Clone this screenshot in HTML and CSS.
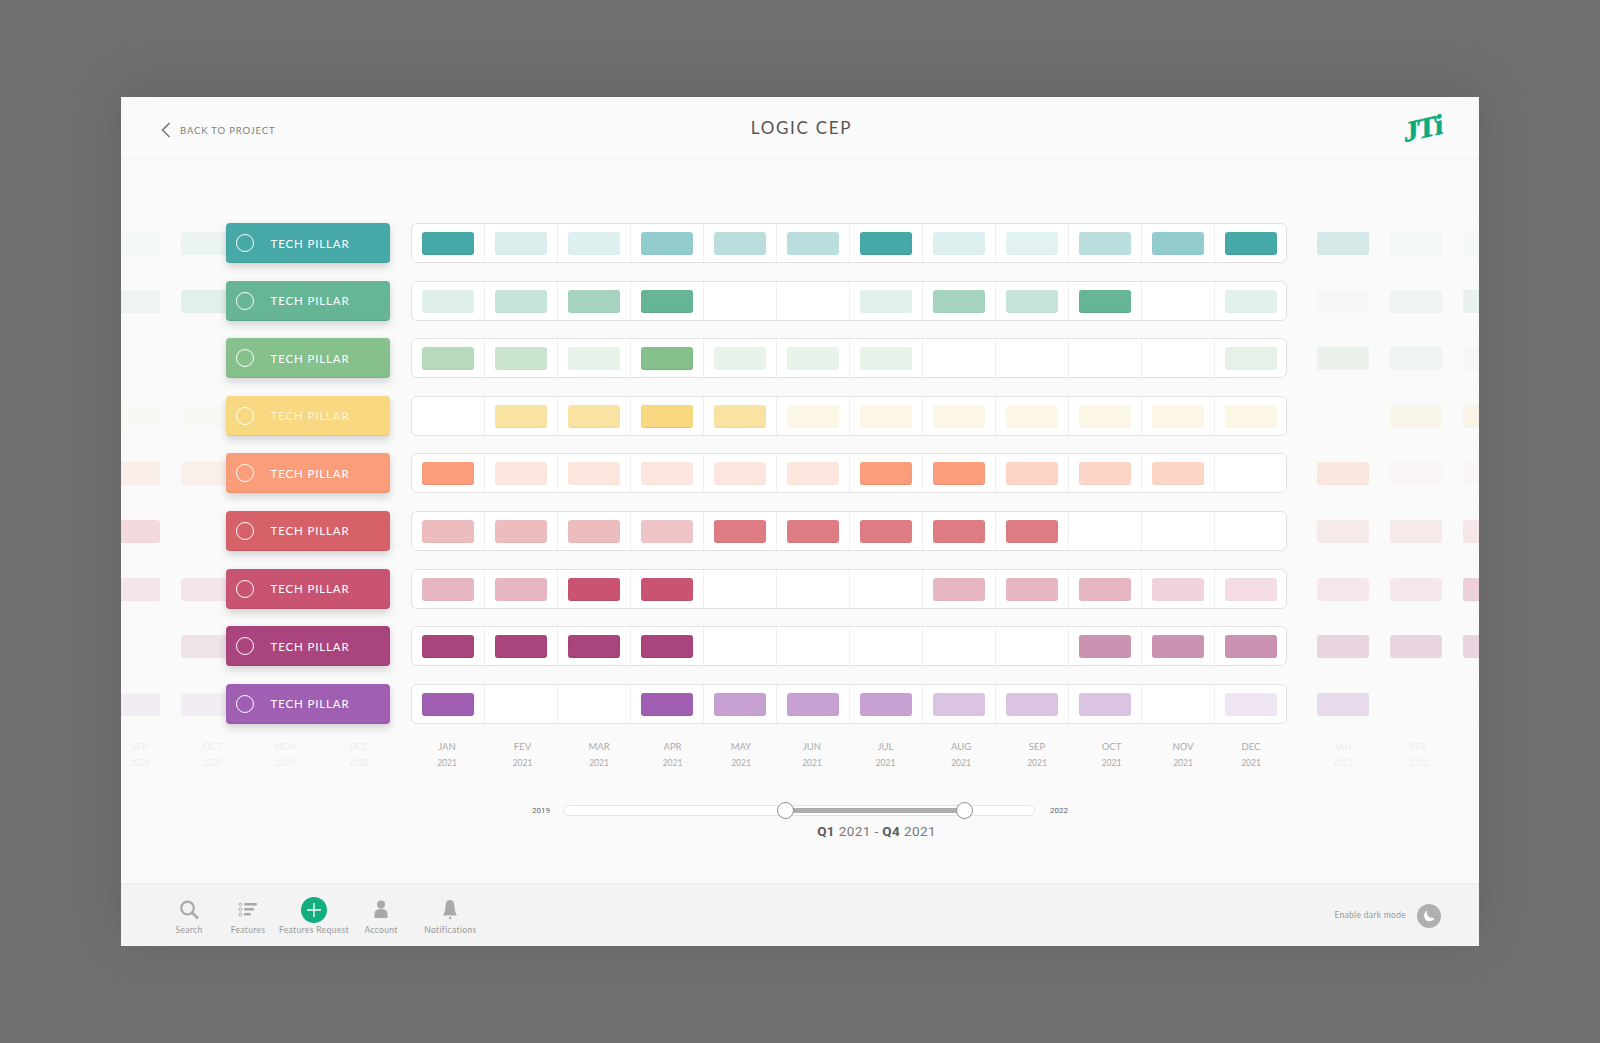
FILE: index.html
```html
<!DOCTYPE html><html lang="en">
<head>
  <meta charset="UTF-8">
  <meta name="viewport" content="width=device-width, initial-scale=1.0">
  <title>Logic CEP</title>
  <link rel="stylesheet" href="styles.css">
</head>
<body>
  <div class="window">
    <header class="top">
      <a class="back">
        <svg class="back-arrow" width="10" height="16" viewBox="0 0 10 16"><path d="M8.5 1 L1.5 8 L8.5 15" fill="none" stroke="#777" stroke-width="1.6"/></svg>
        BACK TO PROJECT
      </a>
      <h1 class="title">LOGIC CEP</h1>
      <div class="logo-wrap"><span class="logo">JTi</span></div>
    </header>

    <main class="board">
      <div class="row teal">
        <div class="past"><i class="chip o3"></i><i class="chip o8"></i></div>
        <div class="pill"><span class="ring"></span>TECH PILLAR</div>
        <div class="track"><i class="chip o100"></i><i class="chip o20"></i><i class="chip o18"></i><i class="chip o55"></i><i class="chip o35"></i><i class="chip o35"></i><i class="chip o100"></i><i class="chip o18"></i><i class="chip o15"></i><i class="chip o35"></i><i class="chip o55"></i><i class="chip o100"></i></div>
        <div class="future"><i class="chip o20"></i><i class="chip o3"></i><i class="chip o3"></i></div>
      </div>
      <div class="row green">
        <div class="past"><i class="chip o8"></i><i class="chip o15"></i></div>
        <div class="pill"><span class="ring"></span>TECH PILLAR</div>
        <div class="track"><i class="chip o20"></i><i class="chip o35"></i><i class="chip o55"></i><i class="chip o100"></i><i class="chip"></i><i class="chip"></i><i class="chip o18"></i><i class="chip o55"></i><i class="chip o35"></i><i class="chip o100"></i><i class="chip"></i><i class="chip o18"></i></div>
        <div class="future"><i class="chip o3"></i><i class="chip o8"></i><i class="chip o12"></i></div>
      </div>
      <div class="row lime">
        <div class="past"><i class="chip"></i><i class="chip"></i></div>
        <div class="pill"><span class="ring"></span>TECH PILLAR</div>
        <div class="track"><i class="chip o55"></i><i class="chip o40"></i><i class="chip o18"></i><i class="chip o100"></i><i class="chip o18"></i><i class="chip o18"></i><i class="chip o18"></i><i class="chip"></i><i class="chip"></i><i class="chip"></i><i class="chip"></i><i class="chip o20"></i></div>
        <div class="future"><i class="chip o12"></i><i class="chip o8"></i><i class="chip o3"></i></div>
      </div>
      <div class="row yellow">
        <div class="past"><i class="chip o3"></i><i class="chip o3"></i></div>
        <div class="pill"><span class="ring"></span>TECH PILLAR</div>
        <div class="track"><i class="chip"></i><i class="chip o70"></i><i class="chip o70"></i><i class="chip o100"></i><i class="chip o70"></i><i class="chip o20"></i><i class="chip o20"></i><i class="chip o20"></i><i class="chip o20"></i><i class="chip o20"></i><i class="chip o20"></i><i class="chip o20"></i></div>
        <div class="future"><i class="chip"></i><i class="chip o12"></i><i class="chip o15"></i></div>
      </div>
      <div class="row orange">
        <div class="past"><i class="chip o12"></i><i class="chip o10"></i></div>
        <div class="pill"><span class="ring"></span>TECH PILLAR</div>
        <div class="track"><i class="chip o100"></i><i class="chip o25"></i><i class="chip o25"></i><i class="chip o25"></i><i class="chip o25"></i><i class="chip o25"></i><i class="chip o100"></i><i class="chip o100"></i><i class="chip o40"></i><i class="chip o40"></i><i class="chip o40"></i><i class="chip"></i></div>
        <div class="future"><i class="chip o20"></i><i class="chip o3"></i><i class="chip o3"></i></div>
      </div>
      <div class="row red">
        <div class="past"><i class="chip o20"></i><i class="chip"></i></div>
        <div class="pill"><span class="ring"></span>TECH PILLAR</div>
        <div class="track"><i class="chip o40"></i><i class="chip o40"></i><i class="chip o40"></i><i class="chip o35"></i><i class="chip o80"></i><i class="chip o80"></i><i class="chip o80"></i><i class="chip o80"></i><i class="chip o80"></i><i class="chip"></i><i class="chip"></i><i class="chip"></i></div>
        <div class="future"><i class="chip o10"></i><i class="chip o10"></i><i class="chip o12"></i></div>
      </div>
      <div class="row crimson">
        <div class="past"><i class="chip o12"></i><i class="chip o12"></i></div>
        <div class="pill"><span class="ring"></span>TECH PILLAR</div>
        <div class="track"><i class="chip o40"></i><i class="chip o40"></i><i class="chip o100"></i><i class="chip o100"></i><i class="chip"></i><i class="chip"></i><i class="chip"></i><i class="chip o40"></i><i class="chip o40"></i><i class="chip o40"></i><i class="chip o25"></i><i class="chip o20"></i></div>
        <div class="future"><i class="chip o10"></i><i class="chip o10"></i><i class="chip o25"></i></div>
      </div>
      <div class="row magenta">
        <div class="past"><i class="chip"></i><i class="chip o12"></i></div>
        <div class="pill"><span class="ring"></span>TECH PILLAR</div>
        <div class="track"><i class="chip o100"></i><i class="chip o100"></i><i class="chip o100"></i><i class="chip o100"></i><i class="chip"></i><i class="chip"></i><i class="chip"></i><i class="chip"></i><i class="chip"></i><i class="chip o55"></i><i class="chip o55"></i><i class="chip o55"></i></div>
        <div class="future"><i class="chip o20"></i><i class="chip o20"></i><i class="chip o20"></i></div>
      </div>
      <div class="row purple">
        <div class="past"><i class="chip o8"></i><i class="chip o8"></i></div>
        <div class="pill"><span class="ring"></span>TECH PILLAR</div>
        <div class="track"><i class="chip o100"></i><i class="chip"></i><i class="chip"></i><i class="chip o100"></i><i class="chip o55"></i><i class="chip o55"></i><i class="chip o55"></i><i class="chip o35"></i><i class="chip o35"></i><i class="chip o35"></i><i class="chip"></i><i class="chip o15"></i></div>
        <div class="future"><i class="chip o20"></i><i class="chip"></i><i class="chip"></i></div>
      </div>

      <div class="months">
        <div class="months-past">
          <div class="month"><b>SEP</b>2020</div><div class="month"><b>OCT</b>2020</div><div class="month"><b>NOV</b>2020</div><div class="month"><b>DEC</b>2020</div>
        </div>
        <div class="months-now">
          <div class="month"><b>JAN</b>2021</div><div class="month"><b>FEV</b>2021</div><div class="month"><b>MAR</b>2021</div><div class="month"><b>APR</b>2021</div><div class="month"><b>MAY</b>2021</div><div class="month"><b>JUN</b>2021</div><div class="month"><b>JUL</b>2021</div><div class="month"><b>AUG</b>2021</div><div class="month"><b>SEP</b>2021</div><div class="month"><b>OCT</b>2021</div><div class="month"><b>NOV</b>2021</div><div class="month"><b>DEC</b>2021</div>
        </div>
        <div class="months-future">
          <div class="month"><b>JAN</b>2022</div><div class="month"><b>FEV</b>2022</div>
        </div>
      </div>

      <div class="range">
        <span class="range-year">2019</span>
        <div class="slider">
          <span class="slider-fill"></span>
          <span class="thumb thumb-from"></span>
          <span class="thumb thumb-to"></span>
        </div>
        <span class="range-year">2022</span>
      </div>
      <div class="range-label"><b>Q1</b> 2021 - <b>Q4</b> 2021</div>
    </main>

    <footer class="bottom">
      <nav class="nav">
        <a class="nav-item nav-search">
          <svg width="22" height="26" viewBox="0 0 22 26"><circle cx="9.5" cy="11" r="6.3" fill="none" stroke="#a9a9a9" stroke-width="2.2"/><path d="M14 15.5 L20 21.5" stroke="#a9a9a9" stroke-width="2.6"/></svg>
          Search
        </a>
        <a class="nav-item nav-features">
          <svg width="20" height="26" viewBox="0 0 20 26"><g fill="none" stroke="#a9a9a9"><circle cx="2.5" cy="7.5" r="1.4"/><circle cx="2.5" cy="12.5" r="1.4"/><circle cx="2.5" cy="17.5" r="1.4"/></g><g fill="#a9a9a9"><rect x="6" y="6" width="13" height="2.6" rx="1"/><rect x="6" y="11" width="10" height="2.6" rx="1"/><rect x="6" y="16" width="7" height="2.6" rx="1"/></g></svg>
          Features
        </a>
        <a class="nav-item nav-request">
          <svg width="26" height="26" viewBox="0 0 26 26"><circle cx="13" cy="13" r="13" fill="#13ad7f"/><path d="M13 6 V20 M6 13 H20" stroke="#fff" stroke-width="1.3"/></svg>
          Features Request
        </a>
        <a class="nav-item nav-account">
          <svg width="16" height="26" viewBox="0 0 16 26"><circle cx="8" cy="7.5" r="4" fill="#a9a9a9"/><path d="M1.5 21 V16.5 C1.5 13.5 4 12 8 12 C12 12 14.5 13.5 14.5 16.5 V21 Z" fill="#a9a9a9"/></svg>
          Account
        </a>
        <a class="nav-item nav-alerts">
          <svg width="16" height="26" viewBox="0 0 16 26"><path d="M8 3 C11.5 3 12.5 6 12.5 9.5 C12.5 13.5 13.5 16 15 18.5 H1 C2.5 16 3.5 13.5 3.5 9.5 C3.5 6 4.5 3 8 3 Z" fill="#a9a9a9"/><circle cx="8" cy="21" r="1.2" fill="#a9a9a9"/></svg>
          Notifications
        </a>
      </nav>
      <div class="dark-mode">
        <span class="dark-label">Enable dark mode</span>
        <span class="dark-btn">
          <svg width="14" height="14" viewBox="0 0 14 14"><path d="M5 1.5 C3.8 5.5 6.5 9.5 12.5 9 C11 12 7.5 13 5 11.8 C1.5 10 1 4 5 1.5 Z" fill="#fff"/></svg>
        </span>
      </div>
    </footer>
  </div>
</body>
</html>
```

FILE: styles.css
```css
* {
  box-sizing: border-box;
}
body {
  font-family: Lato, "Open Sans", sans-serif;
  background: #707070;
  display: flex;
  justify-content: center;
  align-items: center;
  height: 100vh;
  margin: 0;
  overflow: hidden;
}
.window {
  width: 1358px;
  height: 849px;
  background: #fafafa;
  box-shadow: 0 -8px 50px rgba(0,0,0,0.13);
  display: flex;
  flex-direction: column;
  overflow: hidden;
}

/* header */
.top {
  height: 62px;
  flex: none;
  border-bottom: 1px solid #f2f2f2;
  display: grid;
  grid-template-columns: 1fr auto 1fr;
  align-items: center;
  padding: 0 37px 0 40px;
}
.back {
  display: flex;
  align-items: center;
  gap: 9px;
  font-size: 9.5px;
  letter-spacing: 0.85px;
  color: #808080;
  padding-top: 5px;
}
.title {
  margin: 0;
  font-size: 17px;
  font-weight: 400;
  letter-spacing: 1.7px;
  color: #555;
}
.logo-wrap {
  display: flex;
  justify-content: flex-end;
}
.logo {
  font-family: "Liberation Serif", serif;
  font-weight: bold;
  font-size: 29px;
  line-height: 30px;
  letter-spacing: -1.2px;
  color: #0cab7c;
  -webkit-text-stroke: 0.6px #0cab7c;
  transform: skewY(-13deg);
}

/* rows */
.board {
  flex: 1;
  padding-top: 64px;
  display: flex;
  flex-direction: column;
  gap: 17.6px;
}
.row {
  display: flex;
  height: 40px;
  flex: none;
}
.teal { --c: #47a8a8; }
.green { --c: #66b594; }
.lime { --c: #86c08d; }
.yellow { --c: #f8d981; }
.orange { --c: #f99d7a; }
.red { --c: #d66168; }
.crimson { --c: #c85472; }
.magenta { --c: #a9447c; }
.purple { --c: #a05fb2; }

.chip {
  display: block;
  height: 23px;
  width: 52px;
  background: var(--c);
  border-radius: 3px;
  box-shadow: inset 0 -1px 1px rgba(0,0,0,0.08);
  opacity: 0;
}
.o3 { opacity: 0.03; }
.o5 { opacity: 0.05; }
.o8 { opacity: 0.08; }
.o10 { opacity: 0.1; }
.o12 { opacity: 0.12; }
.o15 { opacity: 0.15; }
.o18 { opacity: 0.18; }
.o20 { opacity: 0.2; }
.o25 { opacity: 0.25; }
.o35 { opacity: 0.37; }
.o40 { opacity: 0.42; }
.o55 { opacity: 0.58; }
.o70 { opacity: 0.72; }
.o80 { opacity: 0.82; }
.o100 { opacity: 1; }

.past {
  flex: none;
  width: 156px;
  margin-left: -13px;
  display: flex;
  gap: 21px;
  padding-top: 9px;
}
.pill {
  flex: none;
  position: relative;
  z-index: 1;
  width: 164px;
  height: 40px;
  margin-left: -38.5px;
  padding-left: 10px;
  background: var(--c);
  border-radius: 4px;
  box-shadow: 0 4px 8px rgba(0,0,0,0.16), inset 0 -1px 1px rgba(0,0,0,0.08);
  display: flex;
  align-items: center;
  gap: 17px;
  color: #fff;
  font-size: 11.5px;
  letter-spacing: 0.85px;
}
.yellow .pill {
  color: #fdf3d2;
}
.ring {
  width: 18px;
  height: 18px;
  border: 1px solid #fff;
  border-radius: 50%;
}
.track {
  flex: none;
  width: 876px;
  height: 40px;
  margin-left: 21.5px;
  background: repeating-linear-gradient(to right, #fff 0 72px, #f0f0f0 72px 73px);
  border: 1px solid #e2e2e2;
  border-radius: 6px;
  display: grid;
  grid-template-columns: repeat(12, 73px);
  padding-top: 8px;
}
.track .chip {
  margin-left: 9.5px;
}
.future {
  flex: none;
  width: 200px;
  height: 40px;
  margin-left: 20px;
  border: 1px solid #f8f8f8;
  border-right: 0;
  border-radius: 6px 0 0 6px;
  display: flex;
  gap: 21px;
  padding: 8px 0 0 9px;
}
.future .chip {
  flex: none;
}

/* months */
.months {
  display: flex;
  text-align: center;
  font-size: 8.5px;
  color: #aaa;
}
.months-past,
.months-now,
.months-future {
  display: grid;
  flex: none;
  grid-auto-flow: column;
  grid-auto-columns: 73px;
}
.months-past {
  margin: 0 15.5px 0 -18px;
}
.months-now {
  /* labels in the design do not sit exactly on the cell centres */
  grid-template-columns: 73px 78px 75px 72px 65px 77px 70px 81px 71px 78px 65px 71px;
}
.months-past,
.months-future {
  opacity: 0.18;
}
.months-future {
  margin-left: 18px;
  grid-auto-columns: 76px;
}
.month b {
  display: block;
  font-weight: 400;
  font-size: 9.5px;
  margin-bottom: 6px;
}

/* range slider */
.range {
  display: flex;
  justify-content: center;
  align-items: center;
  gap: 13px;
  margin-top: 19px;
  font-family: Roboto, sans-serif;
  font-size: 8px;
  color: #666;
}
.range-year:last-child {
  margin-left: 2px;
}
.slider {
  position: relative;
  width: 472px;
  height: 11px;
  background: #fff;
  border: 1px solid #e4e4e4;
  border-radius: 6px;
}
.slider-fill {
  position: absolute;
  left: 47%;
  right: 14.8%;
  top: 2px;
  height: 5px;
  background: #adadad;
}
.thumb {
  position: absolute;
  top: -4px;
  width: 17px;
  height: 17px;
  margin-left: -8px;
  background: #fff;
  border: 1px solid #8d8d8d;
  border-radius: 50%;
}
.thumb-from { left: 47%; }
.thumb-to { left: 85.2%; }
.range-label {
  margin-top: -11px;
  padding-left: 153px;
  text-align: center;
  font-family: Roboto, sans-serif;
  font-size: 13.5px;
  letter-spacing: 0.4px;
  color: #777;
}
.range-label b {
  font-weight: 700;
  color: #5c5c5c;
}

/* footer */
.bottom {
  height: 63px;
  flex: none;
  background: #f3f3f3;
  border-top: 1px solid #ebebeb;
  display: flex;
  justify-content: space-between;
  padding: 13px 38px 0 54.5px;
}
.nav {
  display: flex;
}
.nav-item {
  display: flex;
  flex-direction: column;
  align-items: center;
  font-size: 8.5px;
  letter-spacing: 0.35px;
  color: #999;
  gap: 2px;
}
.nav-features { margin-left: 28px; }
.nav-request { margin-left: 13.5px; }
.nav-account { margin-left: 15.5px; }
.nav-alerts { margin-left: 26.5px; }
.dark-mode {
  display: flex;
  align-items: center;
  gap: 11px;
  height: 32px;
  margin-top: 3px;
  font-size: 8.5px;
  letter-spacing: 0.3px;
  color: #999;
}
.dark-label {
  margin-bottom: 3px;
}
.dark-btn {
  width: 24px;
  height: 24px;
  background: #b0b0b0;
  border-radius: 50%;
  display: flex;
  align-items: center;
  justify-content: center;
}
```
